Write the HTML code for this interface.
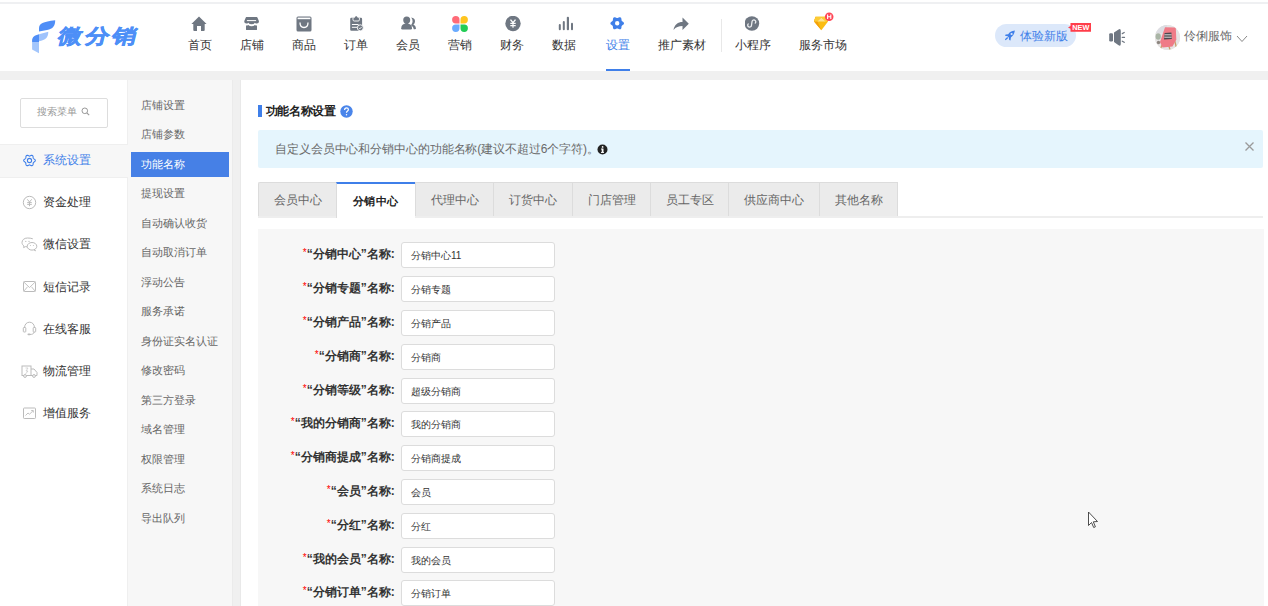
<!DOCTYPE html>
<html><head><meta charset="utf-8">
<style>
*{margin:0;padding:0;box-sizing:border-box}
html,body{width:1268px;height:606px;overflow:hidden;background:#fff;font-family:"Liberation Sans",sans-serif;position:relative}
.a{position:absolute}
.topline{left:0;top:2px;width:1268px;height:2px;background:#eff0f2}
.band{left:0;top:71px;width:1268px;height:9px;background:#f0f0f0}
.nav{top:0;height:71px}
.nav .it{position:absolute;top:0;height:71px;text-align:center}
.nav .ic{position:absolute;left:50%;top:16px;width:16px;height:16px;margin-left:-8px}
.nav .tx{position:absolute;left:0;right:0;top:37px;font-size:12px;line-height:17px;color:#333;white-space:nowrap}
.side1{left:0;top:80px;width:128px;height:526px;background:#fff;border-right:1px solid #efefef}
.side2{left:128px;top:80px;width:105px;height:526px;background:#f7f7f7;border-right:1px solid #ebebeb}
.gap{left:233px;top:80px;width:7px;height:526px;background:#f0f0f0}
.main{left:240px;top:80px;width:1028px;height:526px;background:#fff;border-left:1px solid #e9e9e9}
.m1{position:absolute;left:0;width:127px;height:34px}
.m1 .tx{position:absolute;left:43px;top:8px;font-size:12px;line-height:17px;color:#333;white-space:nowrap}
.m1 svg{position:absolute;left:22px;top:8.7px}
.m2{position:absolute;left:141px;font-size:11px;line-height:16px;color:#666;white-space:nowrap}
.tab{position:absolute;top:182px;height:34px;background:#ebebeb;border:1px solid #dcdcdc;border-right:none;border-bottom:none;font-size:12px;color:#666;text-align:center;line-height:33px;padding-top:1px;white-space:nowrap}
.row{position:absolute;left:258px;width:1005px;height:25px}
.lab{position:absolute;right:868.3px;top:4.3px;font-size:12px;line-height:17px;font-weight:bold;color:#333;white-space:nowrap}
.lab i{font-style:normal;color:#f00;font-weight:normal;font-size:10px;position:relative;top:-2.5px}
.inp{position:absolute;left:143px;top:0;width:154px;height:26px;background:#fff;border:1px solid #dcdcdc;border-radius:3px}
.inp span{position:absolute;left:9px;top:6px;font-size:10px;line-height:14px;color:#333;white-space:nowrap}
</style></head><body>
<div class="a topline"></div>

<!-- logo -->
<svg class="a" style="left:28px;top:16px" width="32" height="40" viewBox="0 0 32 40">
  <path d="M11 15.6 L11 12.5 C11 7.5 15 5.5 27.2 4.2 C27.2 9.5 25 13 19 14 Z" fill="#4f8ef7"/>
  <path d="M11 18.2 L20.3 15.8 C20.3 21.5 17.5 24 11 25.2 Z" fill="#9fc3fc"/>
  <path d="M4.1 26.6 L4.1 24.5 C4.1 21 6.5 19.3 11 18.3 L11 26.6 Z" fill="#4f8ef7"/>
  <path d="M4.1 26.6 L11 26.6 L11 37.2 L4.1 33.6 Z" fill="#a3c6fc"/>
</svg>
<div class="a" style="left:62px;top:21.3px;font-size:20px;line-height:30px;font-weight:900;color:#4d8ff7;transform-origin:0 0;transform:skewX(-14deg) scaleX(1.2);letter-spacing:2.5px;-webkit-text-stroke:0.5px #4d8ff7;white-space:nowrap">微分销</div>

<!-- nav -->
<div class="a nav" style="left:0;width:900px">
  <div class="it" style="left:174px;width:52px">
    <svg class="ic" style="margin-left:-9px" viewBox="0 0 16 16"><path d="M8 0.5 L15.6 8 L13.7 8 L13.7 14 Q13.7 15 12.7 15 L10 15 L10 10 L6 10 L6 15 L3.3 15 Q2.3 15 2.3 14 L2.3 8 L0.4 8 Z" fill="#6f7782"/></svg>
    <div class="tx">首页</div></div>
  <div class="it" style="left:226px;width:52px">
    <svg class="ic" viewBox="0 0 16 16"><path d="M2.2 1 L12.8 1 Q13.2 1 13.4 1.4 L15 5.3 Q15 7.6 12.9 7.6 Q11.6 7.6 10.9 6.7 Q9.9 8.3 7.6 8.3 Q5.3 8.3 4.3 6.7 Q3.6 7.6 2.3 7.6 Q0.2 7.6 0.2 5.3 L1.8 1.4 Q2 1 2.2 1Z" fill="#6f7782"/><rect x="2.9" y="4.1" width="9.2" height="1" fill="#fff"/><path d="M2 9.6 Q3.5 9.6 4.3 8.9 Q5.6 10.2 7.6 10.2 Q9.6 10.2 10.9 8.9 Q11.6 9.6 13 9.6 L13 13.4 Q13 14.1 12.3 14.1 L2.7 14.1 Q2 14.1 2 13.4Z" fill="#6f7782"/></svg>
    <div class="tx">店铺</div></div>
  <div class="it" style="left:278px;width:52px">
    <svg class="ic" viewBox="0 0 16 16"><rect x="0.5" y="0.5" width="15" height="15" rx="1.5" fill="#6f7782"/><rect x="1.6" y="1.6" width="12.8" height="1.6" fill="#fff"/><path d="M4 6.5 Q4 11.5 8 11.5 Q12 11.5 12 6.5" stroke="#fff" stroke-width="1.3" fill="none"/></svg>
    <div class="tx">商品</div></div>
  <div class="it" style="left:330px;width:52px">
    <svg class="ic" style="margin-left:-7.4px" viewBox="0 0 16 16"><path d="M2.3 1.8 L12 1.8 Q13.1 1.8 13.1 2.9 L13.1 13.7 Q13.1 14.8 12 14.8 L2.3 14.8 Q1.2 14.8 1.2 13.7 L1.2 2.9 Q1.2 1.8 2.3 1.8Z" fill="#6f7782"/><path d="M4 1.8 L4 3.8 Q4 5 5.2 5 L9.2 5 Q10.4 5 10.4 3.8 L10.4 1.8" stroke="#fff" stroke-width="0.9" fill="none"/><path d="M5.4 3.8 L5.4 2.2 L6.6 0.3 L7.8 0.3 L9 2.2 L9 3.8Z" fill="#6f7782"/><rect x="2.9" y="8" width="6.6" height="1" fill="#fff"/><rect x="2.9" y="10.8" width="5.6" height="1" fill="#fff"/><circle cx="11.3" cy="11.8" r="3" fill="#6f7782" stroke="#fff" stroke-width="0.9"/><path d="M9.9 11.8 L10.9 12.8 L12.7 10.9" stroke="#fff" stroke-width="0.9" fill="none"/></svg>
    <div class="tx">订单</div></div>
  <div class="it" style="left:382px;width:52px">
    <svg class="ic" style="margin-left:-7.3px" viewBox="0 0 16 16"><circle cx="5.7" cy="4.1" r="3.5" fill="#6f7782"/><path d="M0.2 12.2 Q0.4 7.6 5.6 7.3 Q10.9 7.6 11 12.2 Q11 13.5 9.8 13.5 L1.4 13.5 Q0.2 13.5 0.2 12.2Z" fill="#6f7782"/><rect x="4.3" y="6" width="2.8" height="2" fill="#6f7782"/><path d="M10.2 1.5 Q14 2 14 5.2 Q14 7.4 12.4 8.5 Q14.8 9.8 15 12.3 Q15 13.3 14 13.3 L12.8 13.3 Q12.6 10.6 10 9.2 Q11.6 7.5 11.6 5.2 Q11.6 3.3 10.2 1.5Z" fill="#6f7782"/></svg>
    <div class="tx">会员</div></div>
  <div class="it" style="left:434px;width:52px">
    <svg class="ic" viewBox="0 0 16 16"><path d="M7.5 7.5 L3.8 7.5 A3.7 3.7 0 1 1 7.5 3.8Z" fill="#ff6b78"/><path d="M8.5 7.5 L8.5 3.8 A3.7 3.7 0 1 1 12.2 7.5Z" fill="#ffc51f"/><path d="M7.5 8.5 L7.5 12.2 A3.7 3.7 0 1 1 3.8 8.5Z" fill="#6aabff"/><path d="M8.5 8.5 L12.2 8.5 A3.7 3.7 0 1 1 8.5 12.2Z" fill="#22cc55"/></svg>
    <div class="tx">营销</div></div>
  <div class="it" style="left:486px;width:52px">
    <svg class="ic" style="margin-left:-7.3px" viewBox="0 0 16 16"><circle cx="8" cy="7.5" r="7.7" fill="#6f7782"/><path d="M5.5 3.6 L8 6.6 L10.5 3.6" stroke="#fff" stroke-width="1.4" fill="none"/><path d="M5.3 7.4 H10.7 M5.3 9.6 H10.7 M8 6.6 V11.8" stroke="#fff" stroke-width="1.2"/></svg>
    <div class="tx">财务</div></div>
  <div class="it" style="left:538px;width:52px">
    <svg class="ic" style="margin-left:-6.5px" viewBox="0 0 16 16"><rect x="0.8" y="8" width="2" height="6.2" rx="1" fill="#6f7782"/><rect x="4.8" y="5" width="2" height="9.2" rx="1" fill="#6f7782"/><rect x="8.8" y="0.8" width="2.2" height="13.4" rx="1" fill="#6f7782"/><rect x="13" y="6.8" width="2" height="7.4" rx="1" fill="#6f7782"/></svg>
    <div class="tx">数据</div></div>
  <div class="it" style="left:592px;width:52px">
    <svg class="ic" viewBox="0 0 16 16"><path fill-rule="evenodd" d="M14.00 7.30 L13.87 7.88 L13.50 8.41 L13.00 8.85 L12.46 9.22 L12.01 9.54 L11.70 9.90 L11.55 10.34 L11.49 10.90 L11.44 11.54 L11.31 12.20 L11.04 12.78 L10.60 13.19 L10.03 13.37 L9.39 13.31 L8.75 13.10 L8.17 12.81 L7.66 12.59 L7.20 12.50 L6.74 12.59 L6.23 12.81 L5.65 13.10 L5.01 13.31 L4.37 13.37 L3.80 13.19 L3.36 12.78 L3.09 12.20 L2.96 11.54 L2.91 10.90 L2.85 10.34 L2.70 9.90 L2.39 9.54 L1.94 9.22 L1.40 8.85 L0.90 8.41 L0.53 7.88 L0.40 7.30 L0.53 6.72 L0.90 6.19 L1.40 5.75 L1.94 5.38 L2.39 5.06 L2.70 4.70 L2.85 4.26 L2.91 3.70 L2.96 3.06 L3.09 2.40 L3.36 1.82 L3.80 1.41 L4.37 1.23 L5.01 1.29 L5.65 1.50 L6.23 1.79 L6.74 2.01 L7.20 2.10 L7.66 2.01 L8.17 1.79 L8.75 1.50 L9.39 1.29 L10.03 1.23 L10.60 1.41 L11.04 1.82 L11.31 2.40 L11.44 3.06 L11.49 3.70 L11.55 4.26 L11.70 4.70 L12.01 5.06 L12.46 5.38 L13.00 5.75 L13.50 6.19 L13.87 6.72Z M9.4 7.3 A2.2 2.2 0 1 0 5 7.3 A2.2 2.2 0 1 0 9.4 7.3Z" fill="#3f7fe9"/></svg>
    <div class="tx" style="color:#3f7fe9">设置</div>
    <div style="position:absolute;left:14px;width:24px;top:69px;height:2px;background:#3f7fe9"></div></div>
  <div class="it" style="left:644px;width:76px">
    <svg class="ic" style="margin-left:-9.5px" viewBox="0 0 16 16"><path d="M0.5 14 C1.5 8.5 5 6 9.5 6 L9.5 1.5 L15.8 7.8 L9.5 14 L9.5 10 C5.5 10 3 11 0.5 14Z" fill="#6f7782"/></svg>
    <div class="tx">推广素材</div></div>
  <div class="a" style="left:721px;top:19px;width:1px;height:33px;background:#e8e8e8"></div>
  <div class="it" style="left:721px;width:64px">
    <svg class="ic" viewBox="0 0 16 16"><circle cx="6.9" cy="7.5" r="7.3" fill="#6f7782"/><path d="M3.26 7.86 A1.9 1.9 0 1 0 6.5 9.2 L7 5.8 A1.9 1.9 0 1 1 10.24 7.14" stroke="#eceef0" stroke-width="1.3" fill="none" stroke-linecap="round"/></svg>
    <div class="tx">小程序</div></div>
  <div class="it" style="left:785px;width:76px">
    <svg class="a" style="left:28px;top:11px" width="22" height="20" viewBox="0 0 22 20"><path d="M2.5 5.8 L1 10.6 L8.4 19.2 L15 10.6 L13.5 5.8 Z" fill="#fbbd12"/><path d="M2.5 5.8 L1 10.6 L8.4 19.2 L4.5 10.6 Z" fill="#f4a00c"/><path d="M8.4 6.5 L4.2 10.6 L12.8 10.6 Z" fill="#fde38f"/><path d="M2.5 5.8 L13.5 5.8 L15 10.6 L12.8 10.6 L8.4 6.5 L4.2 10.6 L1 10.6Z" fill="#fccb35"/><circle cx="16.2" cy="5.8" r="4.3" fill="#ff4757"/><path d="M14.6 3.6 V8 M17.8 3.6 V8 M14.6 5.8 H17.8" stroke="#fff" stroke-width="1.1"/></svg>
    <div class="tx">服务市场</div></div>
</div>

<!-- right header -->
<div class="a" style="left:995px;top:24px;width:81px;height:23px;border-radius:12px;background:#dce8fa"></div>
<svg class="a" style="left:1004px;top:30px" width="12" height="11" viewBox="0 0 12 11"><path d="M10.9 0.6 C7.5 0.8 5.5 2.5 4.2 4.2 L1.6 4.5 L1 5.8 L3.6 6.2 L4.8 7.4 L5.2 10 L6.5 10.4 L6.9 7.6 C8.6 6.2 10.3 4.4 10.9 0.6Z" fill="#3f7fe9"/><circle cx="7.6" cy="4" r="1.1" fill="#dce8fa"/><path d="M3.3 6.9 L1.1 9.1 Q0.7 10.4 2 10.1 L4.2 7.9Z" fill="#3f7fe9"/></svg>
<div class="a" style="left:1020px;top:28px;font-size:12px;line-height:17px;color:#3f7fe9;white-space:nowrap">体验新版</div>
<svg class="a" style="left:1068px;top:22px" width="24" height="11" viewBox="0 0 24 11"><path d="M2.5 1 L23 1 L23 9.7 L2.5 9.7 L2.5 6.7 L0 5.4 L2.5 4 Z" fill="#ff3d4a"/><text x="12.8" y="8.2" font-size="7.3" font-weight="bold" fill="#fff" text-anchor="middle" font-family="Liberation Sans">NEW</text></svg>
<svg class="a" style="left:1108px;top:28px" width="18" height="19" viewBox="0 0 18 19"><rect x="1.2" y="5.2" width="3.8" height="8.3" rx="1.2" fill="#6f7782"/><path d="M6 4.6 L10.2 1.7 Q12.8 0 12.8 3 L12.8 15.7 Q12.8 18.8 10.2 17 L6 14.1Z" fill="#6f7782"/><path d="M14.3 5.6 L16.2 4.5 M14.3 9.4 H16.5 M14.3 13.2 L16.2 14.3" stroke="#6f7782" stroke-width="1.3" stroke-linecap="round"/></svg>
<div class="a" style="left:1155px;top:24.5px;width:25px;height:25px;border-radius:50%;background:#e9e4e6;overflow:hidden">
  <svg width="25" height="25" viewBox="0 0 25 25"><rect width="25" height="25" fill="#e6e4e4"/><rect x="0" y="0" width="12" height="8" fill="#dcdde2"/><ellipse cx="3.2" cy="11.5" rx="2.6" ry="3.2" fill="#a9b5a6"/><circle cx="3.5" cy="17.5" r="1.7" fill="#8d8680"/><path d="M19.5 15 L21.5 23 M13.5 20 L15 24.5 M7 20 L5.5 24" stroke="#c99f68" stroke-width="1.3"/><path d="M10 2.3 L20.8 2.5 L21.3 14.5 L17.5 21.5 L7.5 22.5 L5 17 Z" fill="#ef7b87"/><path d="M9.6 8 L16.4 7.6 L16.8 14 L9 14.4 Z" fill="#4b4a50"/><path d="M9.5 9.8 H16.5 M9.3 12.2 H16.6" stroke="#eceaea" stroke-width="0.9"/></svg>
</div>
<div class="a" style="left:1184px;top:28px;font-size:12px;line-height:17px;color:#6b6b6b;white-space:nowrap">伶俐服饰</div>
<svg class="a" style="left:1236px;top:35px" width="12" height="8" viewBox="0 0 12 8"><path d="M1 1 L6 6.5 L11 1" stroke="#888" stroke-width="1" fill="none"/></svg>

<div class="a band"></div>

<!-- sidebars -->
<div class="a side1">
  <div class="a" style="left:19.5px;top:17.5px;width:88px;height:30px;border:1px solid #dddddd;border-radius:2px"></div>
  <div class="a" style="left:37px;top:25px;font-size:10px;line-height:14px;color:#999;white-space:nowrap">搜索菜单</div>
  <svg class="a" style="left:81px;top:27px" width="9" height="9" viewBox="0 0 9 9"><circle cx="3.8" cy="3.8" r="2.8" stroke="#999" stroke-width="1" fill="none"/><path d="M5.8 5.8 L8.2 8.2" stroke="#999" stroke-width="1.1"/></svg>
  <div class="m1" style="top:64px;width:128px;background:#f7f7f7;box-shadow:inset 0 1px #efefef,inset 0 -1px #efefef">
    <svg width="15" height="15" viewBox="0 0 15 15"><path d="M13.30 7.50 L13.18 8.00 L12.87 8.45 L12.43 8.82 L11.96 9.12 L11.57 9.40 L11.31 9.70 L11.18 10.08 L11.14 10.55 L11.11 11.11 L11.00 11.67 L10.77 12.17 L10.40 12.52 L9.91 12.67 L9.36 12.62 L8.82 12.43 L8.32 12.18 L7.89 11.98 L7.50 11.90 L7.11 11.98 L6.68 12.18 L6.18 12.43 L5.64 12.62 L5.09 12.67 L4.60 12.52 L4.23 12.17 L4.00 11.67 L3.89 11.11 L3.86 10.55 L3.82 10.08 L3.69 9.70 L3.43 9.40 L3.04 9.12 L2.57 8.82 L2.13 8.45 L1.82 8.00 L1.70 7.50 L1.82 7.00 L2.13 6.55 L2.57 6.18 L3.04 5.88 L3.43 5.60 L3.69 5.30 L3.82 4.92 L3.86 4.45 L3.89 3.89 L4.00 3.33 L4.23 2.83 L4.60 2.48 L5.09 2.33 L5.64 2.38 L6.18 2.57 L6.68 2.82 L7.11 3.02 L7.50 3.10 L7.89 3.02 L8.32 2.82 L8.82 2.57 L9.36 2.38 L9.91 2.33 L10.40 2.48 L10.77 2.83 L11.00 3.33 L11.11 3.89 L11.14 4.45 L11.18 4.92 L11.31 5.30 L11.57 5.60 L11.96 5.88 L12.43 6.18 L12.87 6.55 L13.18 7.00Z" stroke="#3f7fe9" stroke-width="1.1" fill="none"/><circle cx="7.5" cy="7.5" r="2.1" stroke="#3f7fe9" stroke-width="1.1" fill="none"/></svg>
    <div class="tx" style="color:#3f7fe9">系统设置</div></div>
  <div class="m1" style="top:106.2px">
    <svg width="15" height="15" viewBox="0 0 15 15"><circle cx="7.5" cy="7.5" r="6.2" stroke="#bbb" stroke-width="1" fill="none"/><path d="M5.3 4.3 L7.5 7 L9.7 4.3 M5.2 7.6 H9.8 M5.2 9.4 H9.8 M7.5 7 V11.2" stroke="#bbb" stroke-width="1" fill="none"/></svg>
    <div class="tx">资金处理</div></div>
  <div class="m1" style="top:148.4px">
    <svg style="left:21px" width="17" height="15" viewBox="0 0 17 15"><path d="M6.5 1 C3.2 1 1 3 1 5.5 C1 7 1.8 8.2 3 9 L2.6 10.6 L4.5 9.6 C5.1 9.8 5.7 9.9 6.3 9.9" stroke="#bbb" stroke-width="1" fill="none"/><path d="M11.8 1.8 C10.5 1.2 8 1 6.5 1" stroke="#bbb" stroke-width="1" fill="none"/><ellipse cx="11" cy="9.3" rx="4.8" ry="3.8" stroke="#bbb" stroke-width="1" fill="#fff"/><path d="M13.5 12.5 L14.5 13.8 L13 12.9" stroke="#bbb" stroke-width="1" fill="none"/><circle cx="4.8" cy="4.4" r="0.6" fill="#bbb"/><circle cx="8" cy="4.4" r="0.6" fill="#bbb"/><circle cx="9.4" cy="8.6" r="0.5" fill="#bbb"/><circle cx="12.4" cy="8.6" r="0.5" fill="#bbb"/></svg>
    <div class="tx">微信设置</div></div>
  <div class="m1" style="top:190.6px">
    <svg width="15" height="15" viewBox="0 0 15 15"><rect x="1.5" y="2.5" width="12" height="10" rx="1" stroke="#bbb" stroke-width="1" fill="none"/><path d="M1.8 3 L7.5 8.5 L13.2 3 M1.8 12.2 L5.5 7.8 M13.2 12.2 L9.5 7.8" stroke="#bbb" stroke-width="0.9" fill="none"/></svg>
    <div class="tx">短信记录</div></div>
  <div class="m1" style="top:232.8px">
    <svg width="15" height="15" viewBox="0 0 15 15"><path d="M2.5 7 C2.5 3.5 4.5 1.2 7.5 1.2 C10.5 1.2 12.5 3.5 12.5 7" stroke="#bbb" stroke-width="1" fill="none"/><rect x="1.3" y="6.5" width="2.5" height="4.5" rx="0.7" stroke="#bbb" stroke-width="1" fill="none"/><rect x="11.2" y="6.5" width="2.5" height="4.5" rx="0.7" stroke="#bbb" stroke-width="1" fill="none"/><path d="M12.2 11 C12 12.8 10 13.5 8 13.5" stroke="#bbb" stroke-width="1" fill="none"/><rect x="5.5" y="12.6" width="3" height="1.6" rx="0.8" fill="#bbb"/></svg>
    <div class="tx">在线客服</div></div>
  <div class="m1" style="top:275px">
    <svg style="left:21px" width="17" height="15" viewBox="0 0 17 15"><rect x="1" y="2" width="9" height="9.5" stroke="#bbb" stroke-width="1" fill="none"/><path d="M10 5 L13 5 L16 8.5 L16 11.5 L10 11.5" stroke="#bbb" stroke-width="1" fill="none"/><circle cx="4" cy="12" r="1.4" stroke="#bbb" stroke-width="1" fill="#fff"/><circle cx="13" cy="12" r="1.4" stroke="#bbb" stroke-width="1" fill="#fff"/><path d="M4.5 4 L7 4 L5 7 L7 7 L4.5 10" stroke="#ccc" stroke-width="0.8" fill="none"/></svg>
    <div class="tx">物流管理</div></div>
  <div class="m1" style="top:317.2px">
    <svg width="15" height="15" viewBox="0 0 15 15"><rect x="1.5" y="2" width="12" height="10.5" rx="0.8" stroke="#bbb" stroke-width="1" fill="none"/><path d="M3.5 9.5 L6 7 L7.5 8.2 L10.8 5" stroke="#bbb" stroke-width="0.9" fill="none"/><path d="M9.2 4.5 L11.3 4.5 L11.3 6.6" stroke="#bbb" stroke-width="0.9" fill="none"/></svg>
    <div class="tx">增值服务</div></div>
</div>
<div class="a side2"></div>
<div class="a gap"></div>
<div class="a" style="left:131px;top:152px;width:98px;height:25px;background:#4680e6"></div>
<div class="m2" style="top:96.8px">店铺设置</div>
<div class="m2" style="top:126.3px">店铺参数</div>
<div class="m2" style="top:155.8px;color:#fff">功能名称</div>
<div class="m2" style="top:185.3px">提现设置</div>
<div class="m2" style="top:214.8px">自动确认收货</div>
<div class="m2" style="top:244.3px">自动取消订单</div>
<div class="m2" style="top:273.8px">浮动公告</div>
<div class="m2" style="top:303.3px">服务承诺</div>
<div class="m2" style="top:332.8px">身份证实名认证</div>
<div class="m2" style="top:362.3px">修改密码</div>
<div class="m2" style="top:391.8px">第三方登录</div>
<div class="m2" style="top:421.3px">域名管理</div>
<div class="m2" style="top:450.8px">权限管理</div>
<div class="m2" style="top:480.3px">系统日志</div>
<div class="m2" style="top:509.8px">导出队列</div>

<!-- main -->
<div class="a main"></div>
<div class="a" style="left:258px;top:105px;width:4px;height:12px;background:#3f7fe9"></div>
<div class="a" style="left:265.5px;top:103px;font-size:12px;line-height:17px;letter-spacing:-0.3px;font-weight:bold;color:#222;white-space:nowrap">功能名称设置</div>
<svg class="a" style="left:340px;top:105px" width="13" height="13" viewBox="0 0 13 13"><circle cx="6.5" cy="6.5" r="6.2" fill="#4a85ea"/><path d="M4.6 5 Q4.6 2.8 6.5 2.8 Q8.4 2.8 8.4 4.6 Q8.4 5.6 7.3 6.2 Q6.5 6.7 6.5 7.8" stroke="#fff" stroke-width="1.2" fill="none"/><circle cx="6.5" cy="9.8" r="0.75" fill="#fff"/></svg>

<div class="a" style="left:258px;top:130px;width:1005px;height:38px;background:#e5f5fd;border-radius:2px"></div>
<div class="a" style="left:275px;top:140.5px;font-size:12px;line-height:17px;color:#6a6a6a;letter-spacing:-0.1px;white-space:nowrap">自定义会员中心和分销中心的功能名称(建议不超过6个字符)。</div>
<svg class="a" style="left:597px;top:144px" width="11" height="11" viewBox="0 0 11 11"><circle cx="5.5" cy="5.5" r="5" fill="#222"/><rect x="4.7" y="4.6" width="1.8" height="4" fill="#fff"/><rect x="4" y="8" width="3" height="0.9" fill="#fff"/><rect x="4" y="4.6" width="1.5" height="0.9" fill="#fff"/><circle cx="5.6" cy="2.9" r="0.9" fill="#fff"/></svg>
<svg class="a" style="left:1244px;top:141px" width="11" height="11" viewBox="0 0 11 11"><path d="M1.5 1.5 L9.5 9.5 M9.5 1.5 L1.5 9.5" stroke="#9a9a9a" stroke-width="1.3"/></svg>

<div class="a" style="left:258px;top:216px;width:1005px;height:2px;background:#eeeeee"></div>
<div class="tab" style="left:258px;width:78px;border-top-left-radius:2px">会员中心</div>
<div class="tab" style="left:336px;width:79px;background:#fff;border-top:2px solid #3f7fe9;border-bottom:none;height:36px;color:#222;font-weight:bold;line-height:32px;padding-top:1px;letter-spacing:0.4px;text-indent:-0.8px;font-size:11px">分销中心</div>
<div class="tab" style="left:415px;width:78px">代理中心</div>
<div class="tab" style="left:493px;width:79px">订货中心</div>
<div class="tab" style="left:572px;width:78px">门店管理</div>
<div class="tab" style="left:650px;width:78px">员工专区</div>
<div class="tab" style="left:728px;width:91px">供应商中心</div>
<div class="tab" style="left:819px;width:79px;border-right:1px solid #dcdcdc">其他名称</div>

<div class="a" style="left:258px;top:229px;width:1005.6px;height:377px;background:#f7f7f7"></div>

<div class="row" style="top:242px"><div class="lab"><i>*</i>“分销中心”名称:</div><div class="inp"><span>分销中心11</span></div></div>
<div class="row" style="top:276px"><div class="lab"><i>*</i>“分销专题”名称:</div><div class="inp"><span>分销专题</span></div></div>
<div class="row" style="top:310px"><div class="lab"><i>*</i>“分销产品”名称:</div><div class="inp"><span>分销产品</span></div></div>
<div class="row" style="top:344px"><div class="lab"><i>*</i>“分销商”名称:</div><div class="inp"><span>分销商</span></div></div>
<div class="row" style="top:378px"><div class="lab"><i>*</i>“分销等级”名称:</div><div class="inp"><span>超级分销商</span></div></div>
<div class="row" style="top:411px"><div class="lab"><i>*</i>“我的分销商”名称:</div><div class="inp"><span>我的分销商</span></div></div>
<div class="row" style="top:445px"><div class="lab"><i>*</i>“分销商提成”名称:</div><div class="inp"><span>分销商提成</span></div></div>
<div class="row" style="top:479px"><div class="lab"><i>*</i>“会员”名称:</div><div class="inp"><span>会员</span></div></div>
<div class="row" style="top:513px"><div class="lab"><i>*</i>“分红”名称:</div><div class="inp"><span>分红</span></div></div>
<div class="row" style="top:547px"><div class="lab"><i>*</i>“我的会员”名称:</div><div class="inp"><span>我的会员</span></div></div>
<div class="row" style="top:580px"><div class="lab"><i>*</i>“分销订单”名称:</div><div class="inp"><span>分销订单</span></div></div>

<!-- cursor -->
<svg class="a" style="left:1087px;top:511px" width="12" height="18" viewBox="0 0 12 18"><path d="M1.5 1 L1.5 14.5 L4.5 11.5 L6.7 16.5 L8.4 15.8 L6.3 10.8 L10.5 10.5 Z" fill="#fff" stroke="#3a3a3a" stroke-width="0.9" stroke-linejoin="round"/></svg>
</body></html>
